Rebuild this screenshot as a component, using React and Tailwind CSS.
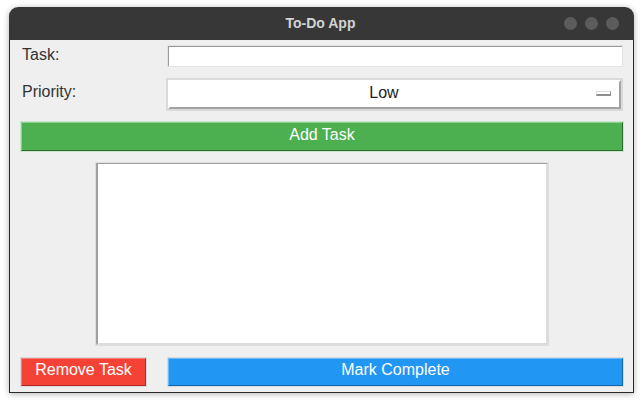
export default function App() {
  return (
    <div
      className="w-[643px] h-[402px] bg-white pt-[7px] pl-[9px]"
      style={{ fontFamily: '"Liberation Sans", Arial, sans-serif' }}
    >
      <div className="w-[625px] rounded-t-[9px] shadow-[0_1px_6px_rgba(0,0,0,0.3)]">
        {/* title bar */}
        <div className="relative h-[33px] rounded-t-[9px] bg-[#373737] flex items-center justify-center">
          <span className="text-[14px] font-bold text-[#d3d3d3] -ml-[2px]">To-Do App</span>
          <div className="absolute right-[15px] top-[10px] flex gap-[8px]">
            <span className="w-[13px] h-[13px] rounded-full bg-[#5c5c5c]" />
            <span className="w-[13px] h-[13px] rounded-full bg-[#5c5c5c]" />
            <span className="w-[13px] h-[13px] rounded-full bg-[#5c5c5c]" />
          </div>
        </div>

        {/* body */}
        <div className="h-[353px] bg-[#efefef] border-x border-b border-[#2a2a2a] text-[16px] text-[#333]">
          {/* task row */}
          <div className="flex items-center pt-[5px]">
            <div className="w-[157px] pl-[12px] leading-none -mt-[3px]">Task:</div>
            <div className="w-[456px] h-[22px] border border-[#e2e2e2]">
              <div className="h-full bg-white border-t border-l border-[#9a9a9a] border-b-[#dadada] border-r-[#dadada]" />
            </div>
          </div>

          {/* priority row */}
          <div className="flex items-center mt-[11px]">
            <div className="w-[157px] pl-[12px] leading-none -mt-[5px]">Priority:</div>
            <div className="w-[457px] h-[33px] border-[2px] border-[#dadada] -ml-[1px]">
              <div className="h-full bg-white border-[2px] border-t-white border-l-white border-b-[#a3a3a3] border-r-[#a3a3a3] flex items-center">
                <span className="flex-1 text-center text-[#222] pl-[2px] -mt-[4px]">Low</span>
                <span className="w-[15px] h-[5px] mr-[8px] -mt-[2px] bg-white border border-t-[#dcdcdc] border-l-[#dcdcdc] border-b-[#8f8f8f] border-r-[#8f8f8f] border-b-[2px]" />
              </div>
            </div>
          </div>

          {/* add task */}
          <div className="mt-[10px] ml-[10px] w-[604px] h-[31px] border border-[#c9e6ca]">
            <div className="h-full bg-[#4caf50] border border-t-[#8fcf92] border-l-[#8fcf92] border-b-[#2e6b30] border-r-[#2e6b30] flex items-center justify-center text-white">
              <span className="-mt-[3px]">Add Task</span>
            </div>
          </div>

          {/* listbox */}
          <div className="mt-[10px] mx-auto w-[454px] h-[184px] border border-[#dedede]">
            <div className="h-full bg-white border-[2px] border-t-[#a0a0a0] border-l-[#a0a0a0] border-b-[#dcdcdc] border-r-[#dcdcdc] border-t-[1px] border-l-[2px]" />
          </div>

          {/* bottom buttons */}
          <div className="flex mt-[11px] ml-[10px] gap-[20px]">
            <div className="w-[127px] h-[30px] border border-[#dadada]">
              <div className="h-full bg-[#f44336] border border-t-[#f77d74] border-l-[#f77d74] border-b-[#b52a20] border-r-[#b52a20] flex items-center justify-center text-white">
                <span className="-mt-[4px]">Remove Task</span>
              </div>
            </div>
            <div className="w-[457px] h-[30px] border border-[#dadada]">
              <div className="h-full bg-[#2196f3] border border-t-[#6ab8f6] border-l-[#6ab8f6] border-b-[#1565b0] border-r-[#1565b0] flex items-center justify-center text-white">
                <span className="-mt-[4px]">Mark Complete</span>
              </div>
            </div>
          </div>
        </div>
      </div>
    </div>
  );
}
